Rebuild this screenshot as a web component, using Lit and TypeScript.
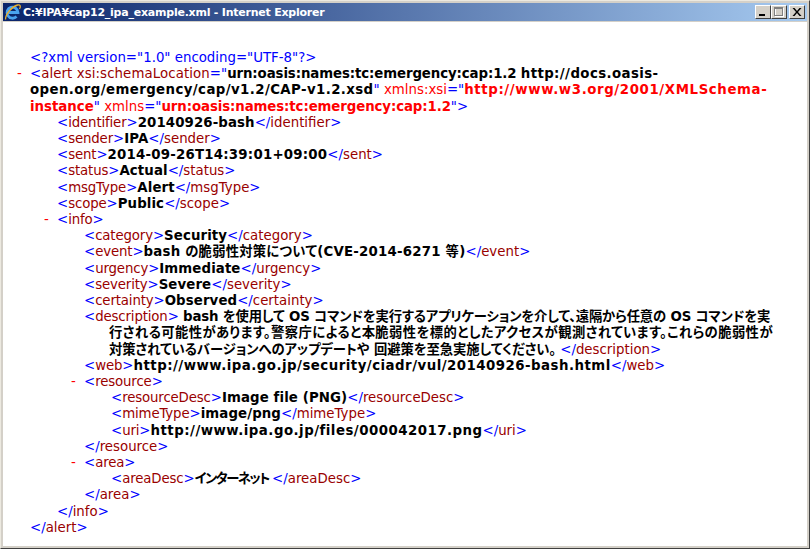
import { LitElement, html, css } from "lit";
import { customElement } from "lit/decorators.js";

@customElement("app-root")
export class AppRoot extends LitElement {
  static styles = css`
    :host { display: block; width: 810px; height: 549px; overflow: hidden; }
    .win { width: 810px; height: 549px; box-sizing: border-box; background: #d4d0c8; padding: 2px 2px 2px 2px; border-right: 1px solid #404040; border-bottom: 1px solid #404040; border-left: 1px solid #ece9e0; border-top: 1px solid #ece9e0; display: flex; flex-direction: column; }
    .title { height: 18px; flex: none; display: flex; align-items: center; background: linear-gradient(90deg, #0a246a, #a6caf0); padding: 0 2px 0 1px; }
    .title svg.ie { flex: none; width: 18px; height: 18px; margin-right: 1px; }
    .title .t { flex: 1; color: #fff; font: bold 11px "DejaVu Sans", "Noto Sans CJK JP", sans-serif; letter-spacing: -0.23px; white-space: pre; }
    .btn { width: 16px; height: 14px; background: #d4d0c8; box-sizing: border-box; border-top: 1px solid #fff; border-left: 1px solid #fff; border-right: 1px solid #404040; border-bottom: 1px solid #404040; display: flex; align-items: center; justify-content: center; flex: none; }
    .btn.last { margin-left: 2px; }
    .btn svg { display: block; }
    .body { flex: 1; min-height: 0; background: #fff; margin-top: 1px; padding: 28px 0 0 11px; font: 13.33px/16.2px "DejaVu Sans", "Noto Sans CJK JP", sans-serif; font-feature-settings: "palt"; color: #000; white-space: nowrap; overflow: hidden; }
    .row { display: flex; }
    .gut { width: 16px; flex: none; color: #f00; padding-left: 3px; box-sizing: border-box; }
    .kids { margin-left: 27px; }
    .b { color: #00f; font-weight: normal; letter-spacing: 0; }
    .n { color: #900; font-weight: normal; letter-spacing: 0; }
    .o { letter-spacing: -0.15px; }
    .wide { letter-spacing: 0.09px; }
    .a { color: #f00; }
    .v { font-weight: bold; letter-spacing: 0.1px; }
    .r { font-weight: bold; color: #f00; }
    .d { letter-spacing: 0.22px; }
    .urn { letter-spacing: -0.1px; }
    .url { letter-spacing: 0.4px; }
    .url2 { letter-spacing: 0.6px; }
    .url3 { letter-spacing: 0.48px; }
    .l1 { letter-spacing: -0.15px; }
    .l2 { letter-spacing: 0.4px; }
    .l3 { letter-spacing: -0.05px; }
    .k { letter-spacing: -1.5px; }
    .line { display: block; padding-left: 25px; }
  `;

  private leaf(tag: string, val: string, cls = "v") {
    return html`<div class="row"><span class="gut"></span><div><span class="b">&lt;</span><span class="n o">${tag}</span><span class="b">&gt;</span><span class=${cls}>${val}</span><span class="b">&lt;/</span><span class="n">${tag}</span><span class="b">&gt;</span></div></div>`;
  }
  private open(tag: string, dash = true) {
    return html`<div class="row"><span class="gut">${dash ? "-" : ""}</span><div><span class="b">&lt;</span><span class="n o">${tag}</span><span class="b">&gt;</span></div></div>`;
  }
  private close(tag: string) {
    return html`<div class="row"><span class="gut"></span><div><span class="b">&lt;/</span><span class="n">${tag}</span><span class="b">&gt;</span></div></div>`;
  }

  render() {
    return html`<div class="win">
      <div class="title">
        <svg class="ie" viewBox="0 0 18 18">
          <path d="M4 9.500H14A5.500 5.500 0 1 0 12.500 13.500" fill="none" stroke="#4aa3f0" stroke-width="2.800"/>
          <path d="M1.500 16.500C1.500 11 8 3.500 13.500 2 16.500 1.200 17 3.500 15.500 6" fill="none" stroke="#e8b030" stroke-width="1.300"/>
        </svg>
        <span class="t">C:¥IPA¥cap12_ipa_example.xml - Internet Explorer</span>
        <span class="btn"><svg width="10" height="8" viewBox="0 0 10 8"><rect x="1" y="6" width="6" height="2" fill="#000"/></svg></span>
        <span class="btn"><svg width="12" height="10" viewBox="0 0 12 10"><rect x="2.500" y="1.500" width="8" height="8" fill="none" stroke="#fff"/><rect x="1.500" y="0.500" width="8" height="8" fill="none" stroke="#808080"/><rect x="1" y="0" width="9" height="2" fill="#808080"/></svg></span>
        <span class="btn last"><svg width="10" height="8" viewBox="0 0 10 8"><path d="M0.500 0h2l2.500 3 2.500-3h2l-3.500 4 3.500 4h-2l-2.500-3-2.500 3h-2l3.500-4z" fill="#000"/></svg></span>
      </div>
      <div class="body">
        <div class="row"><span class="gut"></span><div class="b">&lt;?xml version="1.0" encoding="UTF-8"?&gt;</div></div>
        <div class="row"><span class="gut">-</span><div><span class="b">&lt;</span><span class="n wide">alert xsi:schemaLocation</span><span class="b">="</span><span class="v urn">urn:oasis:names:tc:emergency:cap:1.2</span> <span class="v url">http://docs.oasis-<br>open.org/emergency/cap/v1.2/CAP-v1.2.xsd</span><span class="b">"</span> <span class="a">xmlns:xsi</span><span class="b">="</span><span class="r url2">http://www.w3.org/2001/XMLSchema-</span><br><span class="r">instance</span><span class="b">"</span> <span class="a">xmlns</span><span class="b">="</span><span class="r urn">urn:oasis:names:tc:emergency:cap:1.2</span><span class="b">"&gt;</span></div></div>
        <div class="kids">
          ${this.leaf("identifier", "20140926-bash")}
          ${this.leaf("sender", "IPA")}
          ${this.leaf("sent", "2014-09-26T14:39:01+09:00", "v d")}
          ${this.leaf("status", "Actual")}
          ${this.leaf("msgType", "Alert")}
          ${this.leaf("scope", "Public")}
          ${this.open("info")}
          <div class="kids">
            ${this.leaf("category", "Security")}
            ${this.leaf("event", "bash の脆弱性対策について(CVE-2014-6271 等)", "v d")}
            ${this.leaf("urgency", "Immediate")}
            ${this.leaf("severity", "Severe")}
            ${this.leaf("certainty", "Observed")}
            <div class="row"><span class="gut"></span><div><span class="b">&lt;</span><span class="n o">description</span><span class="b">&gt;</span> <span class="v l1">bash を使用して OS コマンドを実行するアプリケーションを介して、遠隔から任意の OS コマンドを実</span><span class="v l2 line">行される可能性があります。警察庁によると本脆弱性を標的としたアクセスが観測されています。これらの脆弱性が</span><span class="line"><span class="v l3">対策されているバージョンへのアップデートや 回避策を至急実施してください。</span> <span class="b">&lt;/</span><span class="n">description</span><span class="b">&gt;</span></span></div></div>
            ${this.leaf("web", "http://www.ipa.go.jp/security/ciadr/vul/20140926-bash.html", "v url3")}
            ${this.open("resource")}
            <div class="kids">
              ${this.leaf("resourceDesc", "Image file (PNG)")}
              ${this.leaf("mimeType", "image/png")}
              ${this.leaf("uri", "http://www.ipa.go.jp/files/000042017.png", "v url3")}
            </div>
            ${this.close("resource")}
            ${this.open("area")}
            <div class="kids">
              ${this.leaf("areaDesc", "インターネット ", "v k")}
            </div>
            ${this.close("area")}
          </div>
          ${this.close("info")}
        </div>
        ${this.close("alert")}
      </div>
    </div>`;
  }
}
